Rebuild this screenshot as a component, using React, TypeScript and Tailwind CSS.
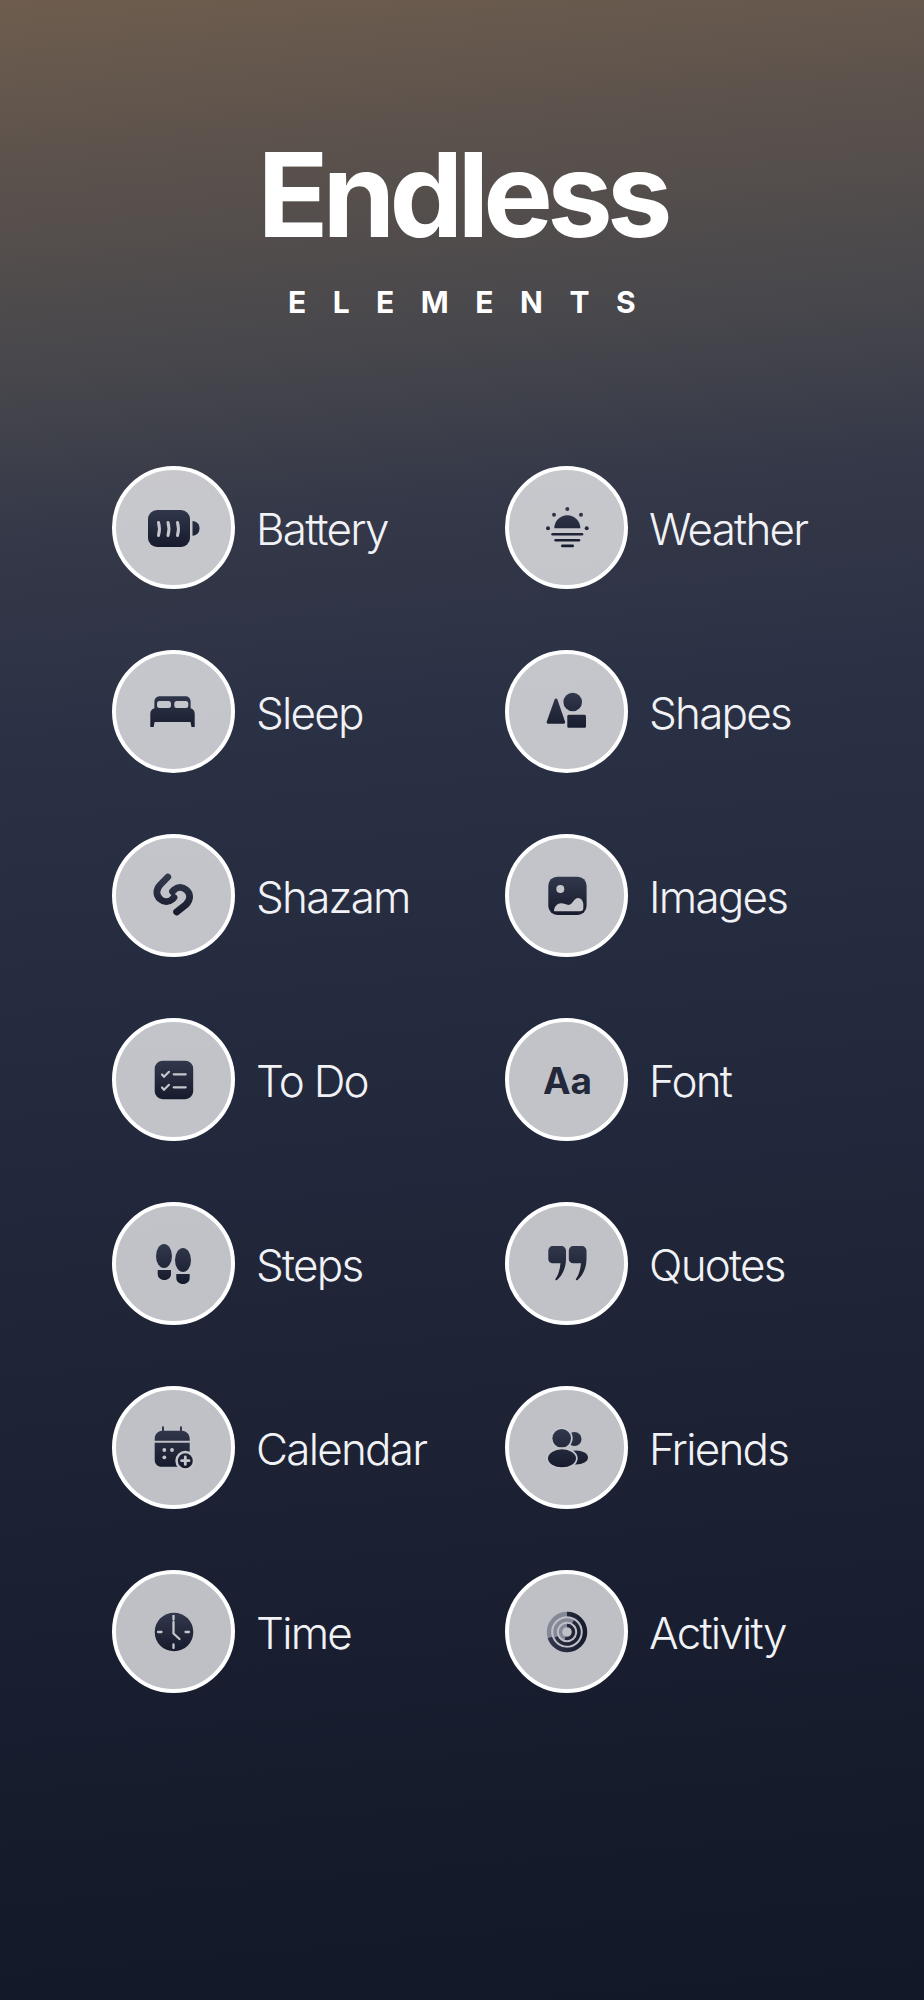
import type { ReactNode } from 'react'

const DARK = 'url(#icon-fill)'
const LIGHT = '#c5c6cb'
const QUOTE = 'M26 22h8c3 0 5 2 5 5v8c0 9-4 17-9 21-1 .8-2.200-.2-1.400-1.200 2.900-4.300 4.400-9.800 4.900-15.500H26c-3 0-4.700-1.800-4.700-4.300v-8c0-3 1.700-5 4.700-5z'

function Icon({ children }: { children: ReactNode }) {
  return (
    <svg viewBox="0 0 80 80" className="h-20 w-20" fill={DARK}>
      <defs>
        <linearGradient id="icon-fill" gradientUnits="userSpaceOnUse" x1="0" y1="18" x2="0" y2="62">
          <stop offset="0" stopColor="#343a4e" />
          <stop offset="1" stopColor="#14182a" />
        </linearGradient>
      </defs>
      {children}
    </svg>
  )
}

const items: { label: string; icon: ReactNode }[] = [
  {
    label: 'Battery',
    icon: (
      <Icon>
        <rect x="14" y="22" width="42" height="37" rx="9" />
        <path d="M58.500 33c4.500.5 7 3 7 7.300s-2.500 7-7 7.400z" />
        <path
          d="M24.500 34.500c1.200 4 1.200 9 0 13M34 34.500c1.200 4 1.200 9 0 13M43.500 34.500c1.200 4 1.200 9 0 13"
          fill="none"
          stroke={LIGHT}
          strokeWidth="3"
          strokeLinecap="round"
        />
      </Icon>
    ),
  },
  {
    label: 'Weather',
    icon: (
      <Icon>
        <path d="M27.300 40.300a13 13 0 0 1 26 0z" />
        <rect x="24.300" y="45" width="32" height="2.600" rx="1.300" />
        <rect x="27.300" y="51" width="26" height="2.600" rx="1.300" />
        <rect x="34" y="56.600" width="13" height="2.600" rx="1.300" />
        <circle cx="40.300" cy="21" r="2" />
        <circle cx="27" cy="26.700" r="2" />
        <circle cx="54" cy="26.700" r="2" />
        <circle cx="21" cy="40.300" r="2" />
        <circle cx="59.700" cy="40.300" r="2" />
      </Icon>
    ),
  },
  {
    label: 'Sleep',
    icon: (
      <Icon>
        <path d="M27 24.300h24c3.500 0 5.600 2 5.600 5.500v6.400c2.600.8 4.100 2.700 4.100 5.300V55h-3.200l-1-5H20.600l-1 5h-3.300V41.500c0-2.600 1.500-4.500 4.100-5.300v-6.400c0-3.500 2.100-5.500 6.600-5.500z" />
        <rect x="23" y="29" width="14" height="7" rx="2.500" fill={LIGHT} />
        <rect x="40.300" y="29" width="14" height="7" rx="2.500" fill={LIGHT} />
      </Icon>
    ),
  },
  {
    label: 'Shapes',
    icon: (
      <Icon>
        <circle cx="45.700" cy="30" r="9.300" />
        <path d="M27.600 27.500c.6-1.200 2.200-1.200 2.800 0l7.700 22.300c.3 1-.3 1.900-1.300 1.900H21c-1 0-1.600-.9-1.300-1.900z" />
        <rect x="40.300" y="42.700" width="18.700" height="13" rx="1.500" />
      </Icon>
    ),
  },
  {
    label: 'Shazam',
    icon: (
      <Icon>
        <path
          d="M33.800 21l-7.300 7.500c-5 5-4.500 11 -.5 14.500 4 3.500 8.500 3.500 12 .5l2-2M42.600 56l9.400-7.500c5-5 4.500-11 .5-14.500-4-3.500-8.500-3.500-12-.5l-2 2"
          fill="none"
          stroke={DARK}
          strokeWidth="6.800"
          strokeLinecap="round"
          strokeLinejoin="round"
        />
      </Icon>
    ),
  },
  {
    label: 'Images',
    icon: (
      <Icon>
        <rect x="21.300" y="20.700" width="38.300" height="38.300" rx="9" />
        <circle cx="33.300" cy="33" r="4" fill={LIGHT} />
        <path
          d="M27 55.300c0-5 3.500-8 7-8 4 0 6 2.400 9 1.300 3-1.100 4-6.600 8-6.600 3 0 5.300 3 5.300 6v4c0 2.300-1 3.300-3.300 3.300z"
          fill={LIGHT}
        />
      </Icon>
    ),
  },
  {
    label: 'To Do',
    icon: (
      <Icon>
        <rect x="20.700" y="20.700" width="38.500" height="38.500" rx="8" />
        <path
          d="M28 34.500l2 2.300 5-5M28 47.500l2 2.300 5-5M39.700 34.300h12M39.700 47.300h12"
          fill="none"
          stroke={LIGHT}
          strokeWidth="2.200"
          strokeLinecap="round"
          strokeLinejoin="round"
        />
      </Icon>
    ),
  },
  {
    label: 'Font',
    icon: (
      <div className="ml-0.5 pt-0.5 font-['Inter'] text-[37px] leading-none font-bold text-[#22273a]">Aa</div>
    ),
  },
  {
    label: 'Steps',
    icon: (
      <Icon>
        <ellipse cx="30" cy="32" rx="8" ry="12" />
        <path d="M23.700 46H37v4c0 3.600-2.900 6-6.700 6s-6.600-2.400-6.600-6z" />
        <ellipse cx="49" cy="36" rx="8" ry="12" />
        <path d="M42.300 50h13.400v4c0 3.600-2.900 6-6.700 6s-6.700-2.400-6.700-6z" />
      </Icon>
    ),
  },
  {
    label: 'Quotes',
    icon: (
      <Icon>
        <path d={QUOTE} />
        <path d={QUOTE} transform="translate(20.500 0)" />
      </Icon>
    ),
  },
  {
    label: 'Calendar',
    icon: (
      <Icon>
        <path d="M28 19.500c0-.8.500-1.200 1-1.200s1 .4 1 1.200v3.200h16v-3.200c0-.8.500-1.200 1-1.200s1 .4 1 1.200v3.200c4.500.3 7.700 3.500 7.700 8v2.100H20.700v-2.100c0-4.500 3.200-7.700 7.300-8z" />
        <path d="M20.700 34.800h35v17c0 4.300-2.700 7-7 7H27.700c-4.300 0-7-2.700-7-7z" />
        <circle cx="30.300" cy="42" r="1.900" fill={LIGHT} />
        <circle cx="38" cy="42" r="1.900" fill={LIGHT} />
        <circle cx="30.300" cy="49.300" r="1.900" fill={LIGHT} />
        <circle cx="51.300" cy="52.700" r="10" fill={LIGHT} />
        <circle cx="51.300" cy="52.700" r="7.500" />
        <path d="M51.300 49v7.400M47.600 52.700H55" fill="none" stroke={LIGHT} strokeWidth="2.800" strokeLinecap="round" />
      </Icon>
    ),
  },
  {
    label: 'Friends',
    icon: (
      <Icon>
        <circle cx="47.500" cy="31" r="7" />
        <ellipse cx="49" cy="49.500" rx="12" ry="7" />
        <circle cx="34.700" cy="30.300" r="9.300" stroke={LIGHT} strokeWidth="3.400" paintOrder="stroke" />
        <ellipse cx="35" cy="50.300" rx="14" ry="9" stroke={LIGHT} strokeWidth="3.400" paintOrder="stroke" />
      </Icon>
    ),
  },
  {
    label: 'Time',
    icon: (
      <Icon>
        <circle cx="40" cy="40" r="19.300" />
        <path
          d="M39.500 24v3.500M39.500 52.500V56M24 40h3.500M51.500 40H55M39.500 30v11.500l6 5.500"
          fill="none"
          stroke={LIGHT}
          strokeWidth="2.300"
          strokeLinecap="round"
          strokeLinejoin="round"
        />
      </Icon>
    ),
  },
  {
    label: 'Activity',
    icon: (
      <Icon>
        <g fill="none" transform="rotate(-90 40 40)">
          <circle cx="40" cy="40" r="18" stroke="#858997" strokeWidth="4.400" />
          <circle cx="40" cy="40" r="12" stroke="#858997" strokeWidth="3.400" />
          <circle cx="40" cy="40" r="6.500" stroke="#858997" strokeWidth="3.400" />
          <circle cx="40" cy="40" r="18" stroke={DARK} strokeWidth="4.400" pathLength={100} strokeDasharray="70 100" />
          <circle cx="40" cy="40" r="12" stroke={DARK} strokeWidth="3.400" pathLength={100} strokeDasharray="60 100" transform="rotate(30 40 40)" />
          <circle cx="40" cy="40" r="6.500" stroke={DARK} strokeWidth="3.400" pathLength={100} strokeDasharray="55 100" />
        </g>
      </Icon>
    ),
  },
]

function Row({ label, icon }: { label: string; icon: ReactNode }) {
  return (
    <div className="flex h-[123px] items-center gap-[21px]">
      <div className="flex h-[123px] w-[123px] shrink-0 items-center justify-center rounded-full border-4 border-white bg-white/[0.72]">
        {icon}
      </div>
      <span className="pt-0.5 font-['Inter'] text-[44px] font-light tracking-[-0.04em] text-[#f1f2f5]">{label}</span>
    </div>
  )
}

export default function App() {
  return (
    <div className="h-[2000px] w-full bg-[linear-gradient(175deg,#6e5d4e_0%,#5a514c_9%,#47474c_18%,#343848_26%,#2b3145_36%,#252b3f_50%,#1f2437_65%,#191e30_80%,#131828_100%)] font-['Inter']">
      <header className="flex flex-col items-center pt-[130px] text-white">
        <h1 className="text-[117px] leading-[130px] font-bold tracking-[-0.05em]">Endless</h1>
        <p className="mt-[24px] pl-[26px] text-[30px] leading-[36px] font-bold tracking-[26.5px]">ELEMENTS</p>
      </header>
      <div className="mt-[146px] grid grid-cols-[393px_1fr] gap-y-[61px] pl-[112px]">
        {items.map((item) => (
          <Row key={item.label} label={item.label} icon={item.icon} />
        ))}
      </div>
    </div>
  )
}
